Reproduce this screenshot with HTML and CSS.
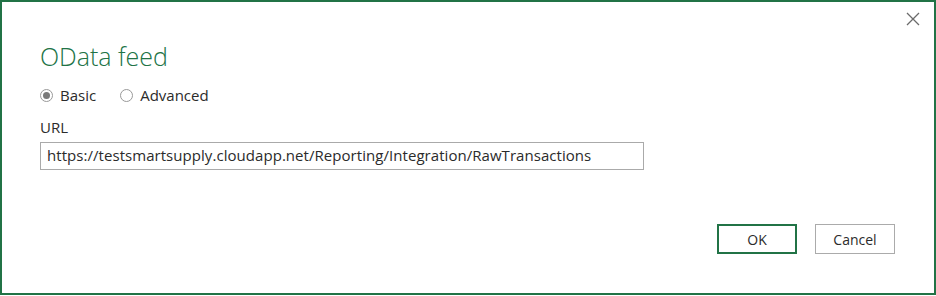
FILE: index.html
```html
<!DOCTYPE html>
<html lang="en">
<head>
    <meta charset="UTF-8">
    <title>OData feed</title>
    <link rel="stylesheet" href="styles.css">
</head>
<body>
    <div class="dialog">
        <button class="close" aria-label="Close">
            <svg width="14" height="14" viewBox="0 0 14 14">
                <path d="M1 1 L13 13 M13 1 L1 13" stroke="#6b6b6b" stroke-width="1.3" fill="none"/>
            </svg>
        </button>

        <h1>OData feed</h1>

        <div class="options">
            <label class="radio"><span class="dot checked"></span>Basic</label>
            <label class="radio"><span class="dot"></span>Advanced</label>
        </div>

        <div class="field">
            <label>URL</label>
            <div class="input">https://testsmartsupply.cloudapp.net/Reporting/Integration/RawTransactions</div>
        </div>

        <div class="actions">
            <button class="btn btn-ok">OK</button>
            <button class="btn">Cancel</button>
        </div>
    </div>
</body>
</html>
```

FILE: styles.css
```css
* {
    margin: 0;
    padding: 0;
    box-sizing: border-box;
}

body {
    background: #fff;
    font-family: 'Open Sans', sans-serif;
    color: #2b2b2b;
}

.dialog {
    position: relative;
    width: 936px;
    height: 295px;
    border: 2px solid #217346;
    padding: 38px 0 0 38px;
}

.close {
    position: absolute;
    top: 10px;
    right: 13px;
    background: none;
    border: none;
    width: 16px;
    height: 16px;
}

h1 {
    font-weight: 300;
    font-size: 25px;
    color: #217346;
    line-height: 32px;
}

.options {
    display: flex;
    gap: 24px;
    margin-top: 13px;
    font-size: 15px;
}

.radio {
    display: flex;
    align-items: center;
    gap: 7px;
}

.dot {
    width: 13px;
    height: 13px;
    border: 1px solid #999;
    border-radius: 50%;
    display: flex;
    align-items: center;
    justify-content: center;
}

.dot.checked::after {
    content: "";
    width: 7px;
    height: 7px;
    border-radius: 50%;
    background: #7a7a7a;
}

.field {
    margin-top: 12px;
    font-size: 15px;
}

.field label {
    display: block;
}

.input {
    margin-top: 5px;
    width: 604px;
    height: 28px;
    border: 1px solid #aaa;
    padding: 2px 6px;
    letter-spacing: 0.05px;
}

.actions {
    display: flex;
    gap: 18px;
    justify-content: flex-end;
    margin: 54px 39px 0 0;
}

.btn {
    width: 80px;
    height: 30px;
    background: #fff;
    border: 1px solid #ababab;
    font-family: inherit;
    font-size: 14px;
    color: #2b2b2b;
}

.btn-ok {
    border: 2px solid #217346;
}
```
